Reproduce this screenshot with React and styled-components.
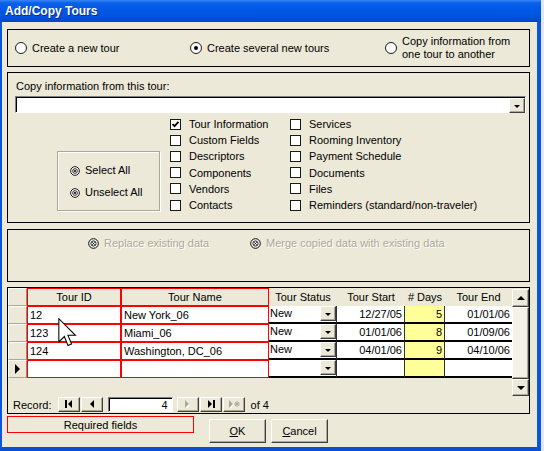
import React from "react";
import styled, { createGlobalStyle } from "styled-components";

const GlobalStyle = createGlobalStyle`
  body {
    margin: 0;
    background: #e3e7ec;
    font-family: "Liberation Sans", Arial, sans-serif;
    font-size: 11px;
    color: #000;
  }
`;

const beige = "#ece9d8";
const blue = "#0856e0";

const Page = styled.div`
  display: flex;
  width: 544px;
  height: 451px;
  overflow: hidden;
`;

const Desktop = styled.div`
  flex: 1;
  background: #e4e8ee;
`;

const Window = styled.div`
  position: relative;
  width: 541px;
  flex-shrink: 0;
  display: flex;
  flex-direction: column;
`;

const TitleBar = styled.div`
  height: 22px;
  flex-shrink: 0;
  display: flex;
  align-items: center;
  padding-left: 5px;
  background: linear-gradient(#3a86f6 0, #0a60ea 3px, #0058e6 10px, #0052dc 17px, #0046c4 22px);
  color: #fff;
  font-weight: bold;
  font-size: 12px;
  text-shadow: 1px 1px #0a2c88;
`;

const Body = styled.div`
  flex: 1;
  background: ${beige};
  border-left: 2px solid ${blue};
  border-right: 4px solid ${blue};
  border-bottom: 4px solid #0a4ed4;
  padding: 7px 7px 0 5px;
  display: flex;
  flex-direction: column;
`;

const Frame = styled.div`
  box-sizing: border-box;
  border: 1px solid #000;
  height: ${(p) => p.h}px;
  margin-top: ${(p) => p.mt || 0}px;
`;

/* option group at the top */
const ModeRow = styled.div`
  height: 100%;
  display: grid;
  grid-template-columns: 175px 195px 1fr;
  align-items: center;
  padding-left: 7px;
`;

const Option = styled.label`
  display: flex;
  align-items: center;
  gap: 5px;
  line-height: 13px;
  color: ${(p) => (p.disabled ? "#aca899" : "#000")};
  text-shadow: ${(p) => (p.disabled ? "1px 1px #fff" : "none")};
`;

const RadioCircle = styled.span`
  box-sizing: border-box;
  width: 12px;
  height: 12px;
  flex-shrink: 0;
  border-radius: 50%;
  border: 1px solid #1a1a1a;
  background: #fff;
  display: flex;
  align-items: center;
  justify-content: center;
  &::after {
    content: "";
    width: 4px;
    height: 4px;
    border-radius: 50%;
    background: ${(p) => (p.checked ? "#000" : "transparent")};
  }
`;

/* copy information frame */
const CopyFrame = styled(Frame)`
  padding: 0 3px 0 7px;
  display: flex;
  flex-direction: column;
`;

const FieldLabel = styled.div`
  margin-top: 7px;
  padding-left: 1px;
  line-height: 13px;
`;

const Combo = styled.div`
  box-sizing: border-box;
  margin-top: 3px;
  height: 17px;
  background: #fff;
  border: 1px solid;
  border-color: #808080 #fff #fff #808080;
  box-shadow: inset 1px 1px #000;
  display: flex;
  justify-content: flex-end;
  padding: 1px 0 0 1px;
`;

const DropButton = styled.div`
  box-sizing: border-box;
  width: 16px;
  height: 15px;
  background: ${beige};
  border: 1px solid;
  border-color: #fff #404040 #404040 #fff;
  box-shadow: inset -1px -1px #aca899;
  display: flex;
  align-items: center;
  justify-content: center;
  flex-shrink: 0;
  &::after {
    content: "";
    border-left: 3px solid transparent;
    border-right: 3px solid transparent;
    border-top: 3px solid #000;
    margin-top: 1px;
  }
`;

const CheckArea = styled.div`
  margin-top: 3px;
  display: grid;
  grid-template-columns: 155px 120px 1fr;
`;

const SelectBox = styled.div`
  box-sizing: border-box;
  margin: 35px 0 0 42px;
  width: 103px;
  height: 60px;
  border: 1px solid #aca899;
  box-shadow: inset 1px 1px #fff, 1px 1px #fff;
  padding: 12px 0 0 12px;
  display: flex;
  flex-direction: column;
  gap: 9px;
`;

const CheckColumn = styled.div`
  display: grid;
  grid-auto-rows: 16.2px;
`;

const CheckItem = styled.div`
  display: flex;
  align-items: center;
  gap: 8px;
  white-space: nowrap;
`;

const Box = styled.span`
  box-sizing: border-box;
  width: 11px;
  height: 11px;
  border: 1px solid #1a1a1a;
  background: #fff;
  display: flex;
  align-items: center;
  justify-content: center;
`;

/* data handling frame */
const MergeRow = styled.div`
  display: grid;
  grid-template-columns: 162px auto;
  padding: 7px 0 0 80px;
`;

/* datasheet */
const Datasheet = styled.div`
  box-sizing: border-box;
  margin-top: 5px;
  height: 127px;
  border: 1px solid #000;
  display: flex;
  flex-direction: column;
`;

const SheetTop = styled.div`
  display: flex;
  height: 108px;
`;

const Grid = styled.div`
  display: grid;
  grid-template-columns: 19px 94px 148px 68px 68px 40px 67px;
  grid-auto-rows: 18px;
  align-content: start;
  width: 504px;
`;

const SelCell = styled.div`
  box-sizing: border-box;
  background: ${beige};
  border: 1px solid;
  border-color: #fff #8c8a80 #aca899 #fff;
  display: flex;
  align-items: center;
  justify-content: center;
`;

const Arrow = styled.span`
  border-top: 5px solid transparent;
  border-bottom: 5px solid transparent;
  border-left: 5px solid #000;
`;

const KeyCell = styled.div`
  box-sizing: border-box;
  border: 1px solid #ff0000;
  background: ${(p) => (p.head ? beige : "#fff")};
  display: flex;
  align-items: center;
  justify-content: ${(p) => (p.head ? "center" : "flex-start")};
  padding: 0 2px;
  white-space: nowrap;
`;

const HeadCell = styled.div`
  background: ${beige};
  display: flex;
  align-items: center;
  justify-content: center;
  white-space: nowrap;
`;

const StatusCell = styled.div`
  box-sizing: border-box;
  background: #fff;
  border-bottom: 2px solid #000;
  border-right: 1px solid #333;
  display: flex;
  justify-content: space-between;
  align-items: flex-start;
  padding-left: 1px;
  line-height: 15px;
`;

const DataCell = styled.div`
  box-sizing: border-box;
  background: ${(p) => (p.yellow ? "#ffff99" : "#fff")};
  border-bottom: 2px solid #000;
  border-right: ${(p) => (p.last ? "none" : "1px solid #333")};
  display: flex;
  align-items: center;
  justify-content: flex-end;
  padding-right: 2px;
`;

const Scrollbar = styled.div`
  width: 17px;
  display: flex;
  flex-direction: column;
  padding-top: 1px;
`;

const ScrollBtn = styled.div`
  box-sizing: border-box;
  height: ${(p) => p.h}px;
  background: ${beige};
  border: 1px solid;
  border-color: #fff #404040 #404040 #fff;
  box-shadow: inset -1px -1px #aca899;
  display: flex;
  align-items: center;
  justify-content: center;
  &::after {
    content: "";
    display: ${(p) => (p.dir ? "block" : "none")};
    border-left: 4px solid transparent;
    border-right: 4px solid transparent;
    border-${(p) => (p.dir === "up" ? "bottom" : "top")}: 4px solid #000;
  }
`;

const Thumb = styled(ScrollBtn)`
  flex: 1;
  background: #f3f1e8;
`;

const NavRow = styled.div`
  flex: 1;
  display: flex;
  align-items: center;
  padding-left: 5px;
`;

const NavLabel = styled.span`
  margin-right: 6px;
`;

const NavButton = styled.div`
  box-sizing: border-box;
  width: 22px;
  height: 15px;
  margin-left: ${(p) => p.ml || 0}px;
  background: ${beige};
  border: 1px solid;
  border-color: #fff #404040 #404040 #fff;
  box-shadow: inset -1px -1px #aca899;
  display: flex;
  align-items: center;
  justify-content: center;
`;

const RecordBox = styled.div`
  box-sizing: border-box;
  width: 65px;
  height: 15px;
  margin-left: 5px;
  background: #fff;
  border: 1px solid;
  border-color: #808080 #fff #fff #808080;
  box-shadow: inset 1px 1px #000;
  display: flex;
  align-items: center;
  justify-content: flex-end;
  padding-right: 4px;
`;

const OfText = styled.span`
  margin-left: 6px;
`;

/* bottom */
const Footer = styled.div`
  margin-top: 2px;
  display: flex;
  align-items: flex-start;
`;

const Required = styled.div`
  box-sizing: border-box;
  width: 187px;
  height: 17px;
  border: 1px solid #ff0000;
  display: flex;
  align-items: center;
  justify-content: center;
`;

const Button = styled.div`
  box-sizing: border-box;
  width: 57px;
  height: 24px;
  margin: 3px 0 0 ${(p) => p.ml}px;
  background: ${beige};
  border: 1px solid;
  border-color: #fff #404040 #404040 #fff;
  box-shadow: inset -1px -1px #aca899;
  display: flex;
  align-items: center;
  justify-content: center;
  u {
    text-decoration: underline;
  }
`;

const CursorWrap = styled.div`
  position: absolute;
  left: 58px;
  top: 318px;
  pointer-events: none;
  line-height: 0;
`;

const OptionIcon = ({ size = 11 }) => (
  <svg width={size} height={size} viewBox="0 0 11 11" style={{ flexShrink: 0 }}>
    <circle cx="5.5" cy="5.5" r="4.8" fill="#fff" stroke="#000" strokeWidth="1" />
    <circle cx="5.5" cy="5.5" r="2.6" fill="#fff" stroke="#000" strokeWidth="0.9" />
    <path d="M4.3 4.3 L6.7 6.7 M6.7 4.3 L4.3 6.7" stroke="#000" strokeWidth="0.9" />
  </svg>
);

const Check = () => (
  <svg width="9" height="9" viewBox="0 0 9 9">
    <path d="M1.5 4 L3.5 6.2 L7.5 1.8" fill="none" stroke="#000" strokeWidth="1.8" />
  </svg>
);

const NavIcon = ({ kind, disabled }) => {
  const c = disabled ? "#aca899" : "#000";
  const shadow = disabled ? (
    <g transform="translate(1 1)" fill="#fff">
      {kind === "next" && <polygon points="3,0 7,4 3,8" />}
      {kind === "new" && <polygon points="1,0 5,4 1,8" />}
    </g>
  ) : null;
  return (
    <svg width="12" height="10" viewBox="0 0 12 10">
      {shadow}
      {kind === "first" && (
        <>
          <rect x="2" y="0" width="2" height="8" fill={c} />
          <polygon points="9,0 5,4 9,8" fill={c} />
        </>
      )}
      {kind === "prev" && <polygon points="8,0 4,4 8,8" fill={c} />}
      {kind === "next" && <polygon points="3,0 7,4 3,8" fill={c} />}
      {kind === "last" && (
        <>
          <polygon points="3,0 7,4 3,8" fill={c} />
          <rect x="8" y="0" width="2" height="8" fill={c} />
        </>
      )}
      {kind === "new" && (
        <>
          <polygon points="1,0 5,4 1,8" fill={c} />
          <path d="M9 1 V7 M6 4 H12 M7 2 L11 6 M11 2 L7 6" stroke={c} strokeWidth="1" />
        </>
      )}
    </svg>
  );
};

const tours = [
  { id: "12", name: "New York_06", status: "New", start: "12/27/05", days: "5", end: "01/01/06" },
  { id: "123", name: "Miami_06", status: "New", start: "01/01/06", days: "8", end: "01/09/06" },
  { id: "124", name: "Washington, DC_06", status: "New", start: "04/01/06", days: "9", end: "04/10/06" },
  { id: "", name: "", status: "", start: "", days: "", end: "", isNew: true },
];

const leftItems = [
  { label: "Tour Information", checked: true },
  { label: "Custom Fields" },
  { label: "Descriptors" },
  { label: "Components" },
  { label: "Vendors" },
  { label: "Contacts" },
];

const rightItems = [
  { label: "Services" },
  { label: "Rooming Inventory" },
  { label: "Payment Schedule" },
  { label: "Documents" },
  { label: "Files" },
  { label: "Reminders (standard/non-traveler)" },
];

export default function App() {
  return (
    <>
      <GlobalStyle />
      <Page>
        <Window>
          <TitleBar>Add/Copy Tours</TitleBar>
          <Body>
            <Frame h={38}>
              <ModeRow>
                <Option>
                  <RadioCircle />
                  Create a new tour
                </Option>
                <Option>
                  <RadioCircle checked />
                  Create several new tours
                </Option>
                <Option>
                  <RadioCircle />
                  <span>
                    Copy information from
                    <br />
                    one tour to another
                  </span>
                </Option>
              </ModeRow>
            </Frame>

            <CopyFrame h={151} mt={5}>
              <FieldLabel>Copy information from this tour:</FieldLabel>
              <Combo>
                <DropButton />
              </Combo>
              <CheckArea>
                <div>
                  <SelectBox>
                    <Option>
                      <OptionIcon size={10} />
                      Select All
                    </Option>
                    <Option>
                      <OptionIcon size={10} />
                      Unselect All
                    </Option>
                  </SelectBox>
                </div>
                <CheckColumn>
                  {leftItems.map((item) => (
                    <CheckItem key={item.label}>
                      <Box>{item.checked && <Check />}</Box>
                      {item.label}
                    </CheckItem>
                  ))}
                </CheckColumn>
                <CheckColumn>
                  {rightItems.map((item) => (
                    <CheckItem key={item.label}>
                      <Box />
                      {item.label}
                    </CheckItem>
                  ))}
                </CheckColumn>
              </CheckArea>
            </CopyFrame>

            <Frame h={53} mt={6}>
              <MergeRow>
                <Option disabled>
                  <OptionIcon />
                  Replace existing data
                </Option>
                <Option disabled>
                  <OptionIcon />
                  Merge copied data with existing data
                </Option>
              </MergeRow>
            </Frame>

            <Datasheet>
              <SheetTop>
                <Grid>
                  <SelCell />
                  <KeyCell head>Tour ID</KeyCell>
                  <KeyCell head>Tour Name</KeyCell>
                  <HeadCell>Tour Status</HeadCell>
                  <HeadCell>Tour Start</HeadCell>
                  <HeadCell># Days</HeadCell>
                  <HeadCell>Tour End</HeadCell>
                  {tours.map((t, i) => (
                    <React.Fragment key={i}>
                      <SelCell>{t.isNew && <Arrow />}</SelCell>
                      <KeyCell>{t.id}</KeyCell>
                      <KeyCell>{t.name}</KeyCell>
                      <StatusCell>
                        <span>{t.status}</span>
                        <DropButton />
                      </StatusCell>
                      <DataCell>{t.start}</DataCell>
                      <DataCell yellow>{t.days}</DataCell>
                      <DataCell last>{t.end}</DataCell>
                    </React.Fragment>
                  ))}
                </Grid>
                <Scrollbar>
                  <ScrollBtn h={18} dir="up" />
                  <Thumb />
                  <ScrollBtn h={17} dir="down" />
                </Scrollbar>
              </SheetTop>
              <NavRow>
                <NavLabel>Record:</NavLabel>
                <NavButton>
                  <NavIcon kind="first" />
                </NavButton>
                <NavButton ml={1}>
                  <NavIcon kind="prev" />
                </NavButton>
                <RecordBox>4</RecordBox>
                <NavButton ml={4}>
                  <NavIcon kind="next" disabled />
                </NavButton>
                <NavButton ml={1}>
                  <NavIcon kind="last" />
                </NavButton>
                <NavButton ml={1}>
                  <NavIcon kind="new" disabled />
                </NavButton>
                <OfText>of 4</OfText>
              </NavRow>
            </Datasheet>

            <Footer>
              <Required>Required fields</Required>
              <Button ml={15}>
                <span>
                  <u>O</u>K
                </span>
              </Button>
              <Button ml={5}>
                <span>
                  <u>C</u>ancel
                </span>
              </Button>
            </Footer>
          </Body>
          <CursorWrap>
            <svg width="19" height="29" viewBox="0 0 12.6 19.4">
              <path
                d="M0.5 0.5 L0.5 16 L4.2 12.4 L6.6 18.4 L9 17.4 L6.6 11.6 L11.6 11.6 Z"
                fill="#fff"
                stroke="#000"
                strokeWidth="0.7"
              />
            </svg>
          </CursorWrap>
        </Window>
        <Desktop />
      </Page>
    </>
  );
}
